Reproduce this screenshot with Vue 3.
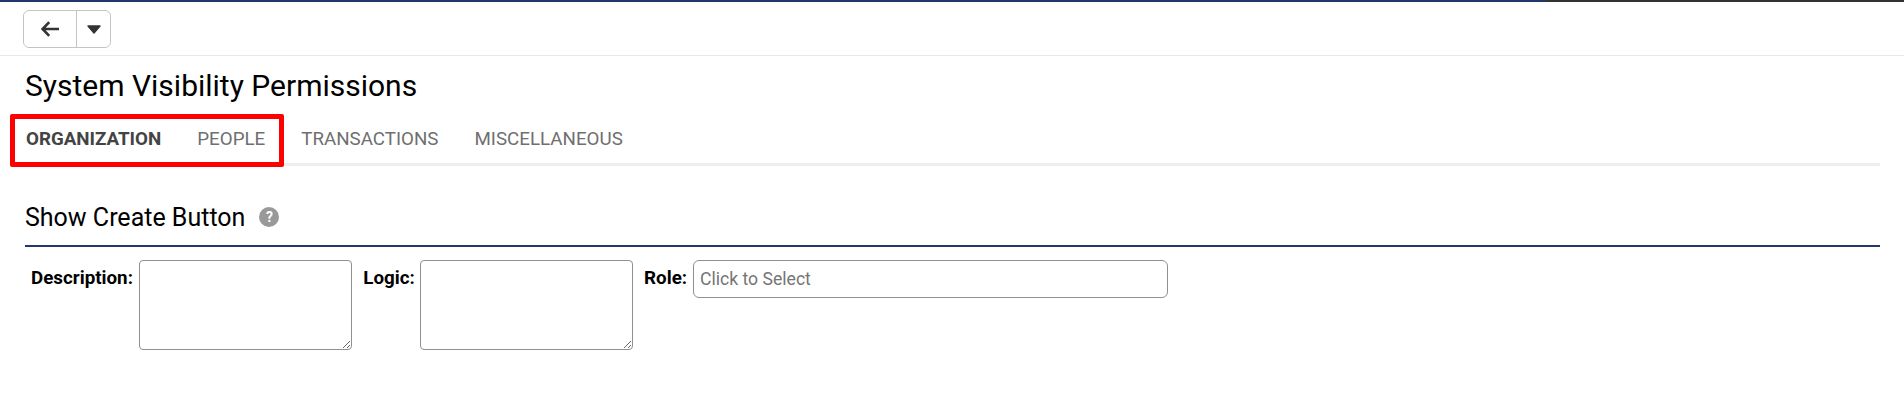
<script setup>
const tabs = ['ORGANIZATION', 'PEOPLE', 'TRANSACTIONS', 'MISCELLANEOUS']
</script>

<template>
  <div class="page">
    <div class="topbar"><div class="topbar-fill"></div></div>
    <div class="toolbar">
      <div class="btn-group">
        <button class="btn back" aria-label="Back">
          <svg width="18" height="16" viewBox="0 0 18 16"><path d="M8.2 1.2 1.6 8l6.6 6.8M2 8h16" fill="none" stroke="#333" stroke-width="2.6"/></svg>
        </button>
        <button class="btn caret" aria-label="More">
          <svg width="14" height="9" viewBox="0 0 14 9"><path d="M1 1h12L7 8z" fill="#333" stroke="#333" stroke-width="1.4" stroke-linejoin="round"/></svg>
        </button>
      </div>
    </div>
    <main class="content">
      <h1 class="title">System Visibility Permissions</h1>
      <div class="tabs">
        <span v-for="(t, i) in tabs" :key="t" class="tab" :class="{ active: i === 0 }">{{ t }}</span>
        <div class="highlight"></div>
      </div>
      <div class="section">
        <span class="section-title">Show Create Button</span>
        <span class="help">?</span>
      </div>
      <div class="form">
        <label class="label">Description:</label>
        <textarea class="area"></textarea>
        <label class="label logic">Logic:</label>
        <textarea class="area"></textarea>
        <label class="label role">Role:</label>
        <input class="select" placeholder="Click to Select" />
      </div>
    </main>
  </div>
</template>

<style>
html, body { background: #fff; }
</style>

<style scoped>
.page { font-family: Roboto, "Liberation Sans", sans-serif; height: 400px; background: #fff; color: #000; overflow: hidden; }
.topbar { height: 2px; background: #333; }
.topbar-fill { width: 1546px; height: 2px; background: #21386b; }
.toolbar { height: 45px; border-bottom: 1px solid #e8e8e8; padding: 8px 0 0 23px; }
.btn-group { display: inline-flex; height: 38px; border: 1px solid #c4c4c4; border-radius: 6px; box-sizing: border-box; }
.btn { background: #fff; border: 0; padding: 0; display: flex; align-items: center; justify-content: center; }
.back { width: 53px; border-right: 1px solid #c4c4c4; border-radius: 6px 0 0 6px; }
.caret { width: 33px; border-radius: 0 6px 6px 0; }
.content { padding: 0 24px 0 25px; }
.title { margin: 0; font-size: 30px; font-weight: 400; line-height: 34px; padding-top: 13px; color: #000; }
.tabs { position: relative; display: flex; gap: 36px; margin-top: 17px; height: 43px; border-bottom: 3px solid #eee; padding-left: 1px; }
.tab { font-size: 18.75px; line-height: 39px; color: #6f6f6f; }
.tab.active { font-weight: 700; color: #444; }
.highlight { position: absolute; left: -15px; top: -6px; width: 274px; height: 53px; border: 5px solid #f00; border-radius: 2px; box-sizing: border-box; }
.section { display: flex; align-items: center; height: 81px; border-bottom: 2px solid #21386b; box-sizing: border-box; padding-top: 23px; gap: 14px; }
.section-title { font-size: 25px; color: #000; }
.help { width: 20px; height: 20px; border-radius: 50%; background: #999; color: #fff; font-size: 14px; font-weight: 700; display: flex; align-items: center; justify-content: center; }
.form { display: flex; align-items: flex-start; padding: 13px 0 0 6px; }
.label { font-size: 18.8px; font-weight: 700; line-height: 37px; margin-right: 6.3px; }
.logic { margin-left: 11px; margin-right: 5.7px; }
.role { margin-left: 10.6px; margin-right: 5.4px; }
.area { width: 213px; height: 90px; border: 1px solid #909090; border-radius: 4px; box-sizing: border-box; background: #fff; margin: 0; }
.select { width: 475px; height: 38px; border: 1px solid #909090; border-radius: 6px; box-sizing: border-box; padding: 0 6.5px; font: 17.6px Roboto, sans-serif; outline: none; }
.select::placeholder { color: #757575; }
</style>
